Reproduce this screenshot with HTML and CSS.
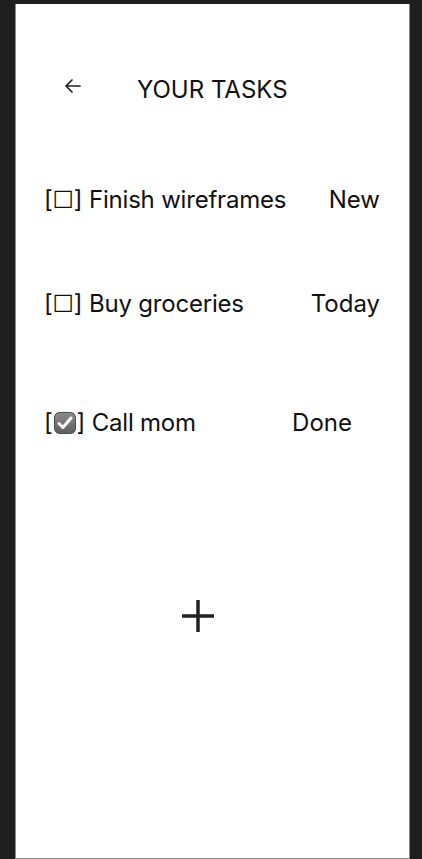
FILE: index.html
```html
<!DOCTYPE html>
<html lang="en">
<head>
<meta charset="utf-8">
<title>Your Tasks</title>
<link rel="stylesheet" href="styles.css">
</head>
<body>
<div class="panel">
  <header class="header">
    <svg class="back" width="18" height="16" viewBox="0 0 18 16" aria-hidden="true">
      <path d="M16 8H2M8 2L2 8L8 14" fill="none" stroke="#222" stroke-width="1.7" stroke-linecap="round" stroke-linejoin="round"/>
    </svg>
    <h1 class="title">YOUR TASKS</h1>
  </header>
  <ul class="tasks">
    <li class="task">
      <span class="label">[☐] Finish wireframes</span>
      <span class="status">New</span>
    </li>
    <li class="task">
      <span class="label">[☐] Buy groceries</span>
      <span class="status">Today</span>
    </li>
    <li class="task task-done">
      <span class="label">[<svg class="check" width="22" height="22" viewBox="0 0 22 22" aria-hidden="true"><defs><linearGradient id="g" x1="0" y1="0" x2="0" y2="1"><stop offset="0" stop-color="#8c8c8c"/><stop offset="1" stop-color="#5e5e5e"/></linearGradient></defs><rect x="0.5" y="0.5" width="21" height="21" rx="5" fill="url(#g)" stroke="#4a4a4a"/><path d="M5 11.5L9 15.5L17 6" fill="none" stroke="#fff" stroke-width="3" stroke-linecap="round" stroke-linejoin="round"/></svg>] Call mom</span>
      <span class="status">Done</span>
    </li>
  </ul>
  <button class="add" type="button" aria-label="Add task">
    <svg width="34" height="34" viewBox="0 0 34 34" aria-hidden="true">
      <path d="M17 1V33M1 17H33" stroke="#222" stroke-width="3.5"/>
    </svg>
  </button>
</div>
</body>
</html>
```
FILE: styles.css
```css
html, body {
  margin: 0;
  padding: 0;
  background: #1e1e1e;
  height: 100%;
}
body {
  padding: 4px 12px 0 15px;
  box-sizing: border-box;
  font-family: Inter, "Noto Sans", "DejaVu Sans", sans-serif;
  color: #111;
}
.panel {
  box-sizing: border-box;
  width: 395px;
  height: 855px;
  background: #fff;
  border: 1px solid #8a8a8a;
  border-top: none;
  padding: 0 29px 0 28px;
  display: flex;
  flex-direction: column;
}
.header {
  margin-top: 71px;
  height: 30px;
  display: flex;
  align-items: center;
}
.back {
  margin-left: 20px;
  margin-top: -8px;
}
.title {
  margin: 0 0 0 55px;
  font-size: 24px;
  font-weight: 400;
  line-height: 30px;
  letter-spacing: 0;
}
.tasks {
  list-style: none;
  margin: 80px 0 0 0;
  padding: 0;
  display: flex;
  flex-direction: column;
  gap: 74px;
}
.task {
  height: 30px;
  display: flex;
  justify-content: space-between;
  align-items: center;
  font-size: 24px;
  line-height: 30px;
}
.label {
  display: flex;
  align-items: center;
  white-space: pre;
  letter-spacing: -0.2px;
}
.task-done {
  margin-top: 15px;
}
.task-done .status {
  margin-right: 28px;
}
.check {
  margin: 0 1px;
}
.add {
  align-self: flex-start;
  margin: 161px 0 0 137px;
  padding: 0;
  border: none;
  background: none;
  width: 34px;
  height: 34px;
}
.add svg {
  display: block;
}
```
